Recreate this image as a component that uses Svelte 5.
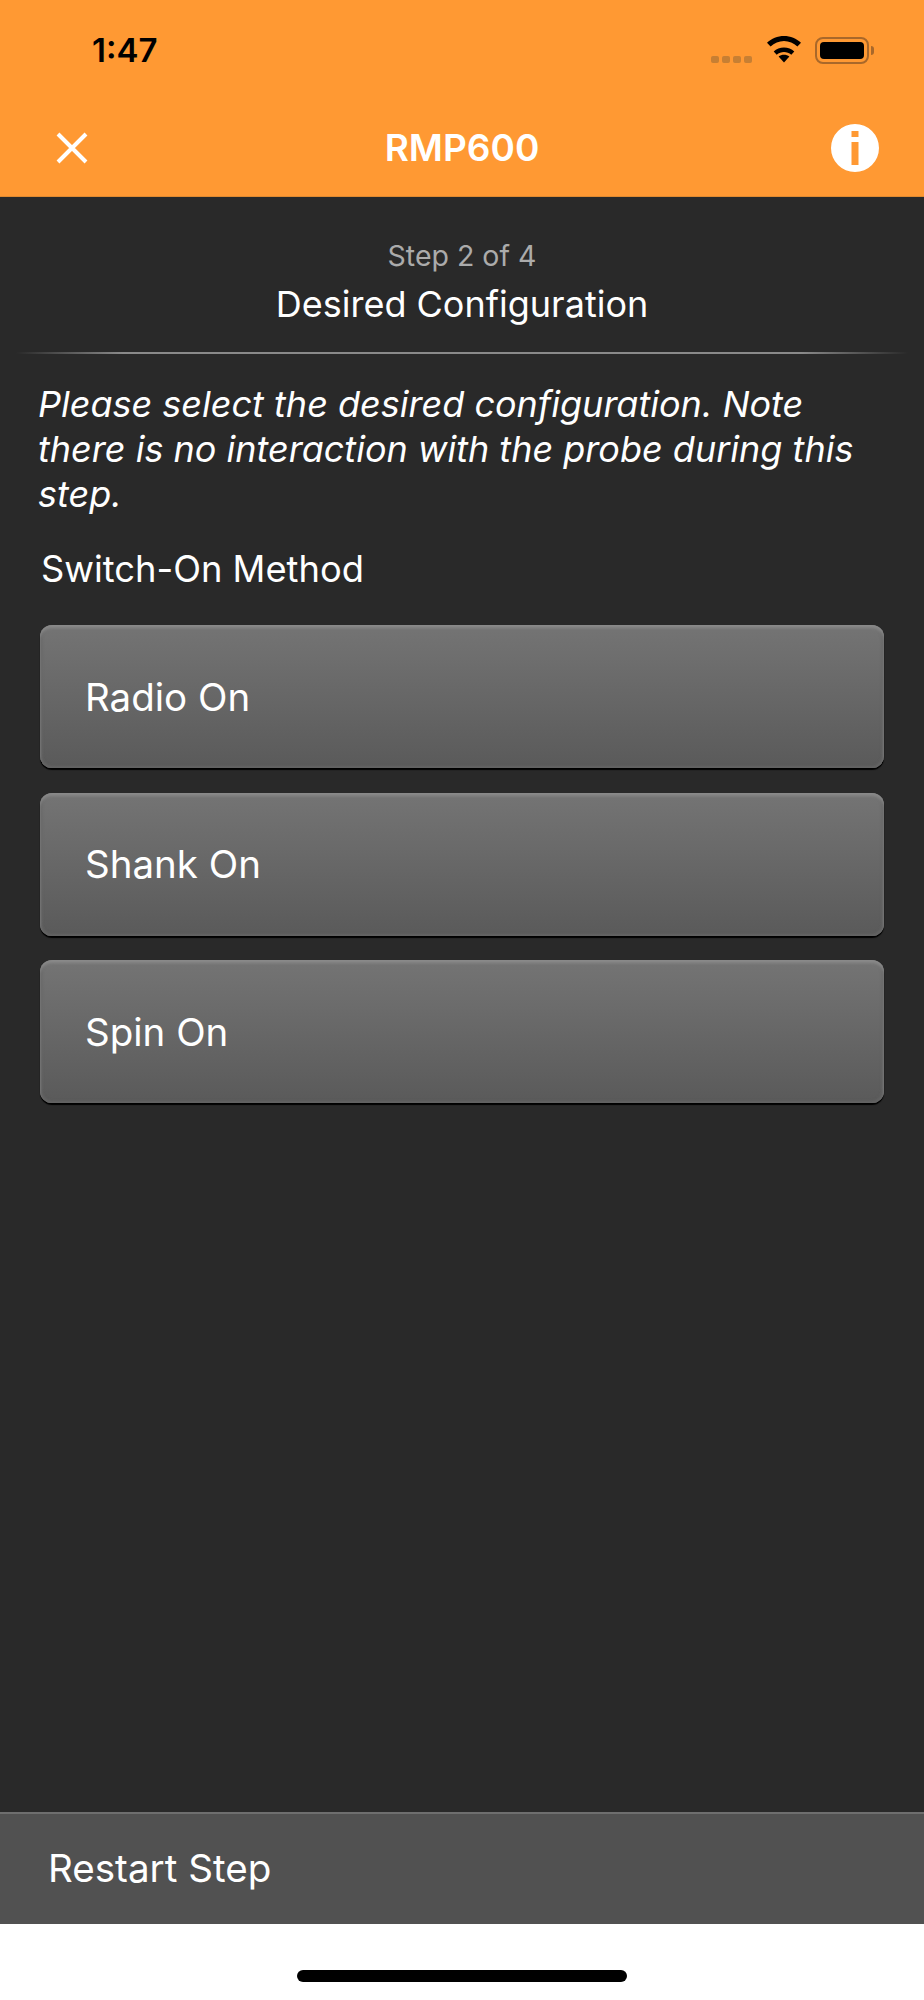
<script>
  const methods = ['Radio On', 'Shank On', 'Spin On'];
</script>

<div class="screen">
  <header class="top">
    <div class="status">
      <span class="time">1:47</span>
      <div class="indicators">
        <div class="dots"><i></i><i></i><i></i><i></i></div>
        <svg class="wifi" width="36" height="28" viewBox="0 0 36 28">
          <path d="M18 27.500 L12.600 21.600 C15.600 19 20.400 19 23.400 21.600 Z" />
          <path d="M18 12.600 C22 12.600 25.600 14.100 28.300 16.600 L25.300 19.800 C21.100 16 14.900 16 10.700 19.800 L7.700 16.600 C10.400 14.100 14 12.600 18 12.600 Z" />
          <path d="M18 1 C24.400 1 30.600 3.600 35 7.800 L31.400 11.600 C27.800 8.200 23 6 18 6 C13 6 8.200 8.200 4.600 11.600 L1 7.800 C5.400 3.600 11.600 1 18 1 Z" />
        </svg>
        <div class="battery"><div class="level"></div></div>
        <div class="nub"></div>
      </div>
    </div>
    <div class="nav">
      <svg class="close" width="32" height="32" viewBox="0 0 32 32">
        <path d="M2 2 L30 30 M30 2 L2 30" />
      </svg>
      <span class="title">RMP600</span>
      <svg class="info" width="48" height="48" viewBox="0 0 48 48">
        <path fill-rule="evenodd" d="M24 0 A24 24 0 1 1 24 48 A24 24 0 1 1 24 0 Z M20.500 7 V13 H27.500 V7 Z M20.500 18 V41 H27.500 V18 Z" />
      </svg>
    </div>
  </header>

  <main class="content">
    <div class="heading">
      <div class="step">Step 2 of 4</div>
      <div class="name">Desired Configuration</div>
    </div>
    <div class="rule"></div>
    <p class="note">Please select the desired configuration. Note there is no interaction with the probe during this step.</p>
    <div class="label">Switch-On Method</div>
    <div class="options">
      {#each methods as m}
        <button class="option">{m}</button>
      {/each}
    </div>
  </main>

  <footer class="restart">Restart Step</footer>
  <div class="home"><div class="bar"></div></div>
</div>

<style>
  :global(body) { margin: 0; background: #fff; }
  .screen {
    width: 924px;
    height: 2000px;
    display: flex;
    flex-direction: column;
    font-family: Inter, "Liberation Sans", sans-serif;
    overflow: hidden;
  }
  .top {
    height: 197px;
    background: #ff9933;
    border-bottom: 1px solid #e08a30;
    box-sizing: border-box;
    display: flex;
    flex-direction: column;
  }
  .status {
    height: 100px;
    box-sizing: border-box;
    display: flex;
    justify-content: space-between;
    align-items: flex-start;
    padding: 30px 50px 0 92px;
  }
  .time {
    font-size: 33px;
    font-weight: 600;
    line-height: 40px;
    color: #000;
  }
  .indicators {
    display: flex;
    align-items: flex-start;
    margin-top: 6px;
  }
  .dots {
    display: flex;
    gap: 3px;
    margin-top: 20px;
    margin-right: 14px;
  }
  .dots i {
    width: 8px;
    height: 7px;
    border-radius: 2px;
    background: #c77f33;
  }
  .wifi { margin-top: -1px; margin-right: 13px; fill: #000; }
  .battery {
    width: 54px;
    height: 27px;
    box-sizing: border-box;
    border: 2px solid #a9682a;
    border-radius: 8px;
    padding: 3px;
    margin-top: 1px;
  }
  .level { height: 100%; background: #000; border-radius: 4px; }
  .nub {
    width: 3px;
    height: 9px;
    margin: 10px 0 0 2px;
    background: #a9682a;
    border-radius: 0 3px 3px 0;
  }
  .nav {
    flex: 1;
    display: grid;
    grid-template-columns: 1fr auto 1fr;
    align-items: center;
    padding: 0 45px;
  }
  .close { stroke: #fff; stroke-width: 4; fill: none; margin-left: 11px; }
  .title {
    color: #fff;
    font-size: 37px;
    font-weight: 600;
    line-height: 42px;
  }
  .info { fill: #fff; justify-self: end; }
  .content {
    flex: 1;
    background: #292929;
    color: #fff;
    display: flex;
    flex-direction: column;
    padding-top: 42px;
  }
  .heading { text-align: center; }
  .step { font-size: 28.500px; line-height: 34px; color: #ababab; }
  .name { font-size: 36px; line-height: 44px; margin-top: 9px; }
  .rule {
    height: 2px;
    margin: 26px 16px 0;
    background: linear-gradient(90deg, transparent, #8a8a8a 12%, #8a8a8a 88%, transparent);
  }
  .note {
    margin: 28px 50px 0 38px;
    font-style: italic;
    font-size: 36px;
    line-height: 45px;
  }
  .label {
    margin: 30px 0 0 41px;
    font-size: 36.300px;
    line-height: 44px;
  }
  .options {
    margin: 34px 40px 0;
    display: flex;
    flex-direction: column;
    gap: 24.500px;
  }
  .option {
    height: 143px;
    border: 0;
    border-radius: 12px;
    padding: 0 0 0 45px;
    text-align: left;
    color: #fff;
    font: inherit;
    font-size: 38.500px;
    background: linear-gradient(180deg, #747474, #5a5a5a);
    box-shadow: inset 0 3px 3px #8a8a8a, inset 0 -2px 3px #636363, inset 2px 0 3px #666, inset -2px 0 3px #666, 0 2px 1px #000;
  }
  .restart {
    height: 112px;
    box-sizing: border-box;
    background: #515151;
    border-top: 2px solid #6e6e6e;
    color: #fff;
    font-size: 38.600px;
    line-height: 108px;
    padding-left: 48px;
  }
  .home {
    height: 76px;
    background: #fff;
    display: flex;
    justify-content: center;
    padding-top: 46px;
    box-sizing: border-box;
  }
  .bar {
    width: 330px;
    height: 12px;
    border-radius: 6px;
    background: #000;
  }
</style>
